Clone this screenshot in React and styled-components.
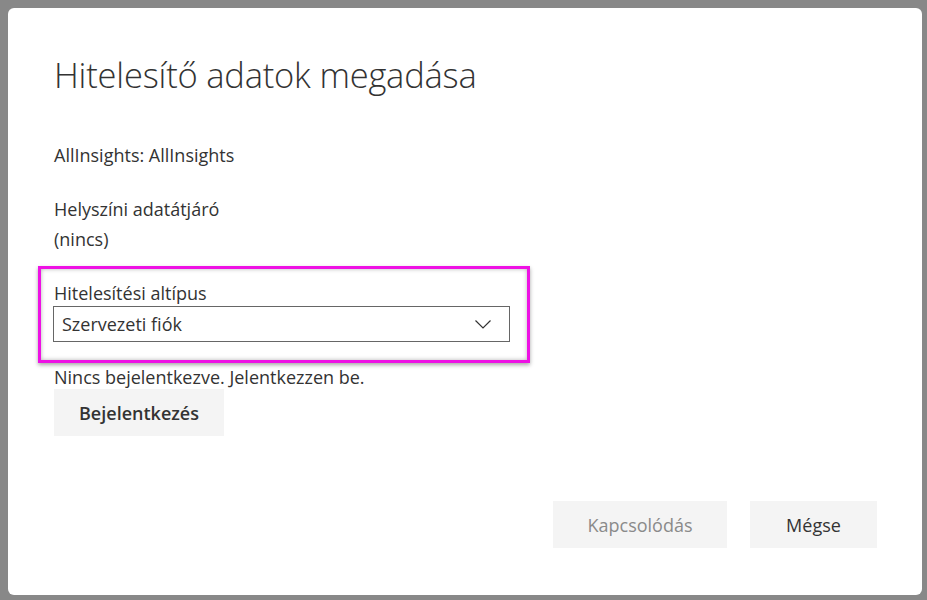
import React from "react";
import styled, { createGlobalStyle } from "styled-components";

const Global = createGlobalStyle`
  html, body { margin: 0; padding: 0; }
  body {
    background: #888888;
    font-family: "Open Sans", "Noto Sans", sans-serif;
    width: 927px;
    height: 600px;
    overflow: hidden;
  }
`;

const Frame = styled.div`
  padding: 8px 5px 5px 8px;
  height: 600px;
  box-sizing: border-box;
`;

const Dialog = styled.div`
  background: #ffffff;
  border-radius: 6px;
  height: 100%;
  box-sizing: border-box;
  padding: 47px 45px 0 46px;
  display: flex;
  flex-direction: column;
  color: #333333;
`;

const Title = styled.h1`
  margin: 0;
  font-weight: 300;
  font-size: 34.5px;
  line-height: 40px;
  color: #333333;
  letter-spacing: -0.2px;
`;

const Text = styled.div`
  font-size: 18px;
  line-height: ${(p) => p.$lh || 30}px;
  margin-top: ${(p) => p.$top || 0}px;
`;

const Highlight = styled.div`
  margin: 12px 0 0 -16px;
  width: 486px;
  padding: 11px 17px 18px 12px;
  box-sizing: border-box;
  width: 492px;
  border: 3px solid #ee11e4;
  box-shadow: 0 2px 4px rgba(0, 0, 0, 0.35), inset 0 0 4px rgba(0, 0, 0, 0.3);
`;

const Label = styled.div`
  font-size: 18px;
  line-height: 26px;
  padding-left: 1px;
`;

const Select = styled.div`
  height: 36px;
  border: 1px solid #666666;
  box-sizing: border-box;
  display: flex;
  align-items: center;
  justify-content: space-between;
  padding: 0 18px 0 8px;
  font-size: 18px;
`;

const Button = styled.div`
  background: #f4f4f4;
  height: 47px;
  display: flex;
  align-items: center;
  justify-content: center;
  font-size: 18px;
  font-weight: ${(p) => (p.$bold ? 600 : 400)};
  color: ${(p) => (p.$disabled ? "#8a8a8a" : "#333333")};
  width: ${(p) => p.$w}px;
`;

const Footer = styled.div`
  margin-top: auto;
  margin-bottom: 47px;
  display: flex;
  justify-content: flex-end;
  gap: 23px;
`;

export default function App() {
  return (
    <Frame>
      <Global />
      <Dialog>
        <Title>Hitelesítő adatok megadása</Title>
        <Text $top={45}>AllInsights: AllInsights</Text>
        <Text $top={24}>Helyszíni adatátjáró</Text>
        <Text>(nincs)</Text>
        <Highlight>
          <Label>Hitelesítési altípus</Label>
          <Select>
            <span>Szervezeti fiók</span>
            <svg width="16" height="9" viewBox="0 0 16 9">
              <path d="M0.5 0.5 L8 8 L15.5 0.5" fill="none" stroke="#333" strokeWidth="1.2" />
            </svg>
          </Select>
        </Highlight>
        <Text $top={2} $lh={24}>Nincs bejelentkezve. Jelentkezzen be.</Text>
        <Button $bold $w={170}>Bejelentkezés</Button>
        <Footer>
          <Button $disabled $w={174}>Kapcsolódás</Button>
          <Button $w={127}>Mégse</Button>
        </Footer>
      </Dialog>
    </Frame>
  );
}
